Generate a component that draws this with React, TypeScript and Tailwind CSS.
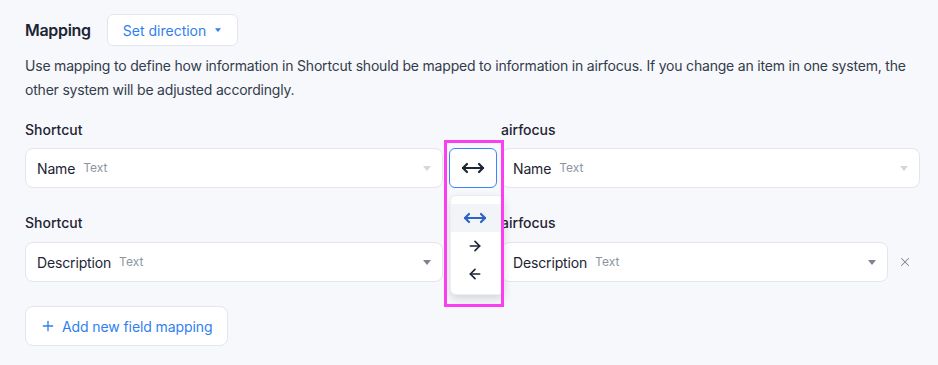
import React from "react";
import { MoveHorizontal, ArrowRight, ArrowLeft, Plus, X } from "lucide-react";

function Caret({ color, w = 8, h = 5 }: { color: string; w?: number; h?: number }) {
  return (
    <svg width={w} height={h} viewBox="0 0 8 5" className="shrink-0">
      <path d="M0 0h8L4 5z" fill={color} />
    </svg>
  );
}

function Select({ name, light, className }: { name: string; light?: boolean; className?: string }) {
  return (
    <div
      className={`h-10 flex items-center bg-white border border-[#e3e6ec] rounded-lg pl-[11px] pr-[11px] ${className ?? ""}`}
    >
      <span className="text-[14px] text-[#1d2433] tracking-[-0.15px]">{name}</span>
      <span className="ml-2 text-[12px] text-[#8c94a2]">Text</span>
      <span className="flex-1" />
      <Caret color={light ? "#d3d7de" : "#7d8491"} />
    </div>
  );
}

export default function App() {
  return (
    <div
      className="w-[938px] h-[365px] bg-[#f7f8fb] pl-[25px] pr-[18px] pt-[14px] relative overflow-hidden"
      style={{ fontFamily: "Inter, 'Noto Sans', sans-serif" }}
    >
      <div className="flex items-center h-8">
        <span className="text-[16px] font-semibold text-[#1d2433] tracking-[-0.3px]">Mapping</span>
        <button className="ml-[16px] h-8 w-[131px] bg-white border border-[#e3e6ec] rounded-md flex items-center pl-[15px] text-[14px] text-[#2f7ff0]">
          Set direction
          <span className="ml-[9px]">
            <Caret color="#2f7ff0" w={6} h={4} />
          </span>
        </button>
      </div>
      <p className="mt-2 text-[14px] leading-6 text-[#333c4c] tracking-[-0.2px]">
        Use mapping to define how information in Shortcut should be mapped to information in airfocus. If you change an item in one system, the other system will be adjusted accordingly.
      </p>

      {/* Row 1 */}
      <div className="mt-[18px] flex">
        <div className="w-[418px]">
          <div className="h-5 leading-5 text-[14px] font-medium text-[#1d2433]">Shortcut</div>
          <Select name="Name" light className="mt-2" />
        </div>
        <div className="w-[48px] ml-[6px] pt-7 relative">
          <div className="h-10 w-12 bg-white border border-[#3b86f7] rounded-md flex items-center justify-center text-[#1d2433]">
            <MoveHorizontal size={24} strokeWidth={2.2} />
          </div>
        </div>
        <div className="w-[419px] ml-[4px]">
          <div className="h-5 leading-5 text-[14px] font-medium text-[#1d2433]">airfocus</div>
          <Select name="Name" light className="mt-2" />
        </div>
      </div>

      {/* Row 2 */}
      <div className="mt-[25px] flex">
        <div className="w-[418px]">
          <div className="h-5 leading-5 text-[14px] font-medium text-[#1d2433]">Shortcut</div>
          <Select name="Description" className="mt-[9px]" />
        </div>
        <div className="w-[48px] ml-[6px]" />
        <div className="w-[387px] ml-[4px]">
          <div className="h-5 leading-5 text-[14px] font-medium text-[#1d2433]">airfocus</div>
          <Select name="Description" className="mt-[9px]" />
        </div>
        <div className="flex-1 pt-[29px] flex items-center justify-center">
          <div className="h-10 flex items-center pl-[2px]">
            <X size={14} strokeWidth={1.75} className="text-[#7d8491]" />
          </div>
        </div>
      </div>

      <button className="mt-6 h-10 w-[203px] bg-white border border-[#e3e6ec] rounded-lg flex items-center pl-[14px] text-[14px] text-[#2f7ff0] tracking-[-0.1px]">
        <Plus size={16} strokeWidth={2} />
        <span className="ml-[6px]">Add new field mapping</span>
      </button>

      {/* Dropdown menu */}
      <div className="absolute left-[450px] top-[195px] w-[54px] h-[100px] bg-white rounded-md border border-[#eceef2] shadow-[0_4px_8px_rgba(20,30,50,0.15)] py-2">
        <div className="h-7 bg-[#f2f4f8] flex items-center justify-center pr-1 text-[#2a64c4]">
          <MoveHorizontal size={24} strokeWidth={2.2} />
        </div>
        <div className="h-7 flex items-center justify-center pr-1 text-[#1d2433]">
          <ArrowRight size={16} strokeWidth={2.5} />
        </div>
        <div className="h-7 flex items-center justify-center pr-1 text-[#1d2433]">
          <ArrowLeft size={16} strokeWidth={2.5} />
        </div>
      </div>

      {/* Highlight annotation */}
      <div className="absolute left-[444px] top-[140px] w-[60px] h-[167px] border-[3px] border-[#fb3ef2] pointer-events-none" />
    </div>
  );
}
